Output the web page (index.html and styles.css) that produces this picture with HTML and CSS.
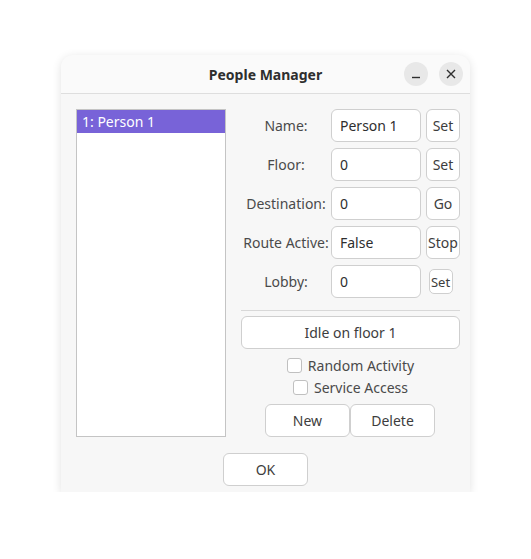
FILE: index.html
```html
<!DOCTYPE html>
<html lang="en">
<head>
    <meta charset="UTF-8">
    <title>People Manager</title>
    <link rel="stylesheet" href="styles.css">
</head>
<body>
    <div class="window">
        <div class="titlebar">
            <span class="title">People Manager</span>
            <div class="controls">
                <span class="ctl">
                    <svg width="10" height="10" viewBox="0 0 10 10"><path d="M1 8.5h8" stroke="#2e2e2e" stroke-width="1.4"/></svg>
                </span>
                <span class="ctl">
                    <svg width="10" height="10" viewBox="0 0 10 10"><path d="M1 1l8 8M9 1l-8 8" stroke="#2e2e2e" stroke-width="1.4"/></svg>
                </span>
            </div>
        </div>
        <div class="content">
            <div class="main">
                <div class="list">
                    <div class="item selected">1: Person 1</div>
                </div>
                <div class="side">
                    <div class="form">
                        <label>Name:</label>
                        <div class="field">Person 1</div>
                        <button class="btn small">Set</button>

                        <label>Floor:</label>
                        <div class="field">0</div>
                        <button class="btn small">Set</button>

                        <label>Destination:</label>
                        <div class="field">0</div>
                        <button class="btn small">Go</button>

                        <label>Route Active:</label>
                        <div class="field">False</div>
                        <button class="btn small">Stop</button>

                        <label>Lobby:</label>
                        <div class="field">0</div>
                        <div class="tiny-wrap"><button class="btn tiny">Set</button></div>
                    </div>
                    <div class="sep"></div>
                    <button class="btn wide">Idle on floor 1</button>
                    <div class="checks">
                        <div class="check"><span class="box"></span>Random Activity</div>
                        <div class="check"><span class="box"></span>Service Access</div>
                    </div>
                    <div class="actions">
                        <button class="btn act">New</button>
                        <button class="btn act">Delete</button>
                    </div>
                </div>
            </div>
            <div class="footer">
                <button class="btn act">OK</button>
            </div>
        </div>
    </div>
</body>
</html>
```

FILE: styles.css
```css
body {
    margin: 0;
    background: #ffffff;
    font-family: "Noto Sans", "Open Sans", sans-serif;
    font-size: 14px;
    color: #3d3d3d;
}
.window {
    margin: 55px 0 0 61px;
    width: 409px;
    height: 437px;
    background: #f7f7f7;
    border-radius: 12px 12px 0 0;
    box-shadow: 0 2px 10px rgba(0, 0, 0, 0.12);
    box-sizing: border-box;
}
.titlebar {
    height: 38px;
    border-bottom: 1px solid #dedede;
    background: #fafafa;
    border-radius: 12px 12px 0 0;
    display: flex;
    align-items: center;
    justify-content: center;
    position: relative;
}
.title {
    font-weight: bold;
    font-size: 14px;
    color: #2e2e2e;
}
.controls {
    position: absolute;
    right: 7px;
    top: 7px;
    display: flex;
    gap: 11px;
}
.ctl {
    width: 24px;
    height: 24px;
    border-radius: 50%;
    background: #e8e8e8;
    display: flex;
    align-items: center;
    justify-content: center;
}
.content {
    padding: 15px 10px 0 15px;
}
.main {
    display: flex;
    gap: 15px;
}
.list {
    width: 150px;
    height: 328px;
    background: #ffffff;
    border: 1px solid #c4c4c4;
    box-sizing: border-box;
}
.item {
    height: 23px;
    line-height: 23px;
    padding-left: 5px;
}
.item.selected {
    background: #7863d8;
    color: #ffffff;
}
.side {
    width: 219px;
    display: flex;
    flex-direction: column;
    align-items: center;
}
.form {
    display: grid;
    grid-template-columns: 90px 90px 34px;
    column-gap: 0;
    row-gap: 6px;
    width: 219px;
}
.form label {
    text-align: center;
    align-self: center;
    color: #4a4a4a;
}
.field {
    height: 33px;
    line-height: 31px;
    box-sizing: border-box;
    border: 1px solid #cfcfcf;
    border-radius: 6px;
    background: #ffffff;
    padding-left: 8px;
    color: #2e2e2e;
}
.btn {
    font-family: inherit;
    font-size: 14px;
    color: #3d3d3d;
    background: #ffffff;
    border: 1px solid #cfcfcf;
    border-radius: 6px;
    padding: 0;
}
.btn.small {
    height: 33px;
    width: 34px;
    margin-left: 5px;
}
.tiny-wrap {
    display: flex;
    align-items: center;
    justify-content: center;
    margin-left: 5px;
}
.btn.tiny {
    width: 24px;
    height: 25px;
    border-radius: 5px;
    font-size: 13px;
}
.sep {
    width: 219px;
    height: 1px;
    background: #d8d8d8;
    margin: 12px 0 5px;
}
.btn.wide {
    width: 219px;
    height: 33px;
}
.checks {
    display: flex;
    flex-direction: column;
    align-items: center;
    margin-top: 5px;
}
.check {
    display: flex;
    align-items: center;
    height: 22px;
    gap: 6px;
    color: #4a4a4a;
}
.box {
    width: 15px;
    height: 15px;
    box-sizing: border-box;
    border: 1px solid #c0c0c0;
    border-radius: 3px;
    background: #ffffff;
}
.actions {
    display: flex;
    margin-top: 6px;
    margin-left: -1px;
}
.btn.act {
    width: 85px;
    height: 33px;
}
.footer {
    display: flex;
    justify-content: center;
    margin-top: 16px;
    margin-left: -5px;
}
```
